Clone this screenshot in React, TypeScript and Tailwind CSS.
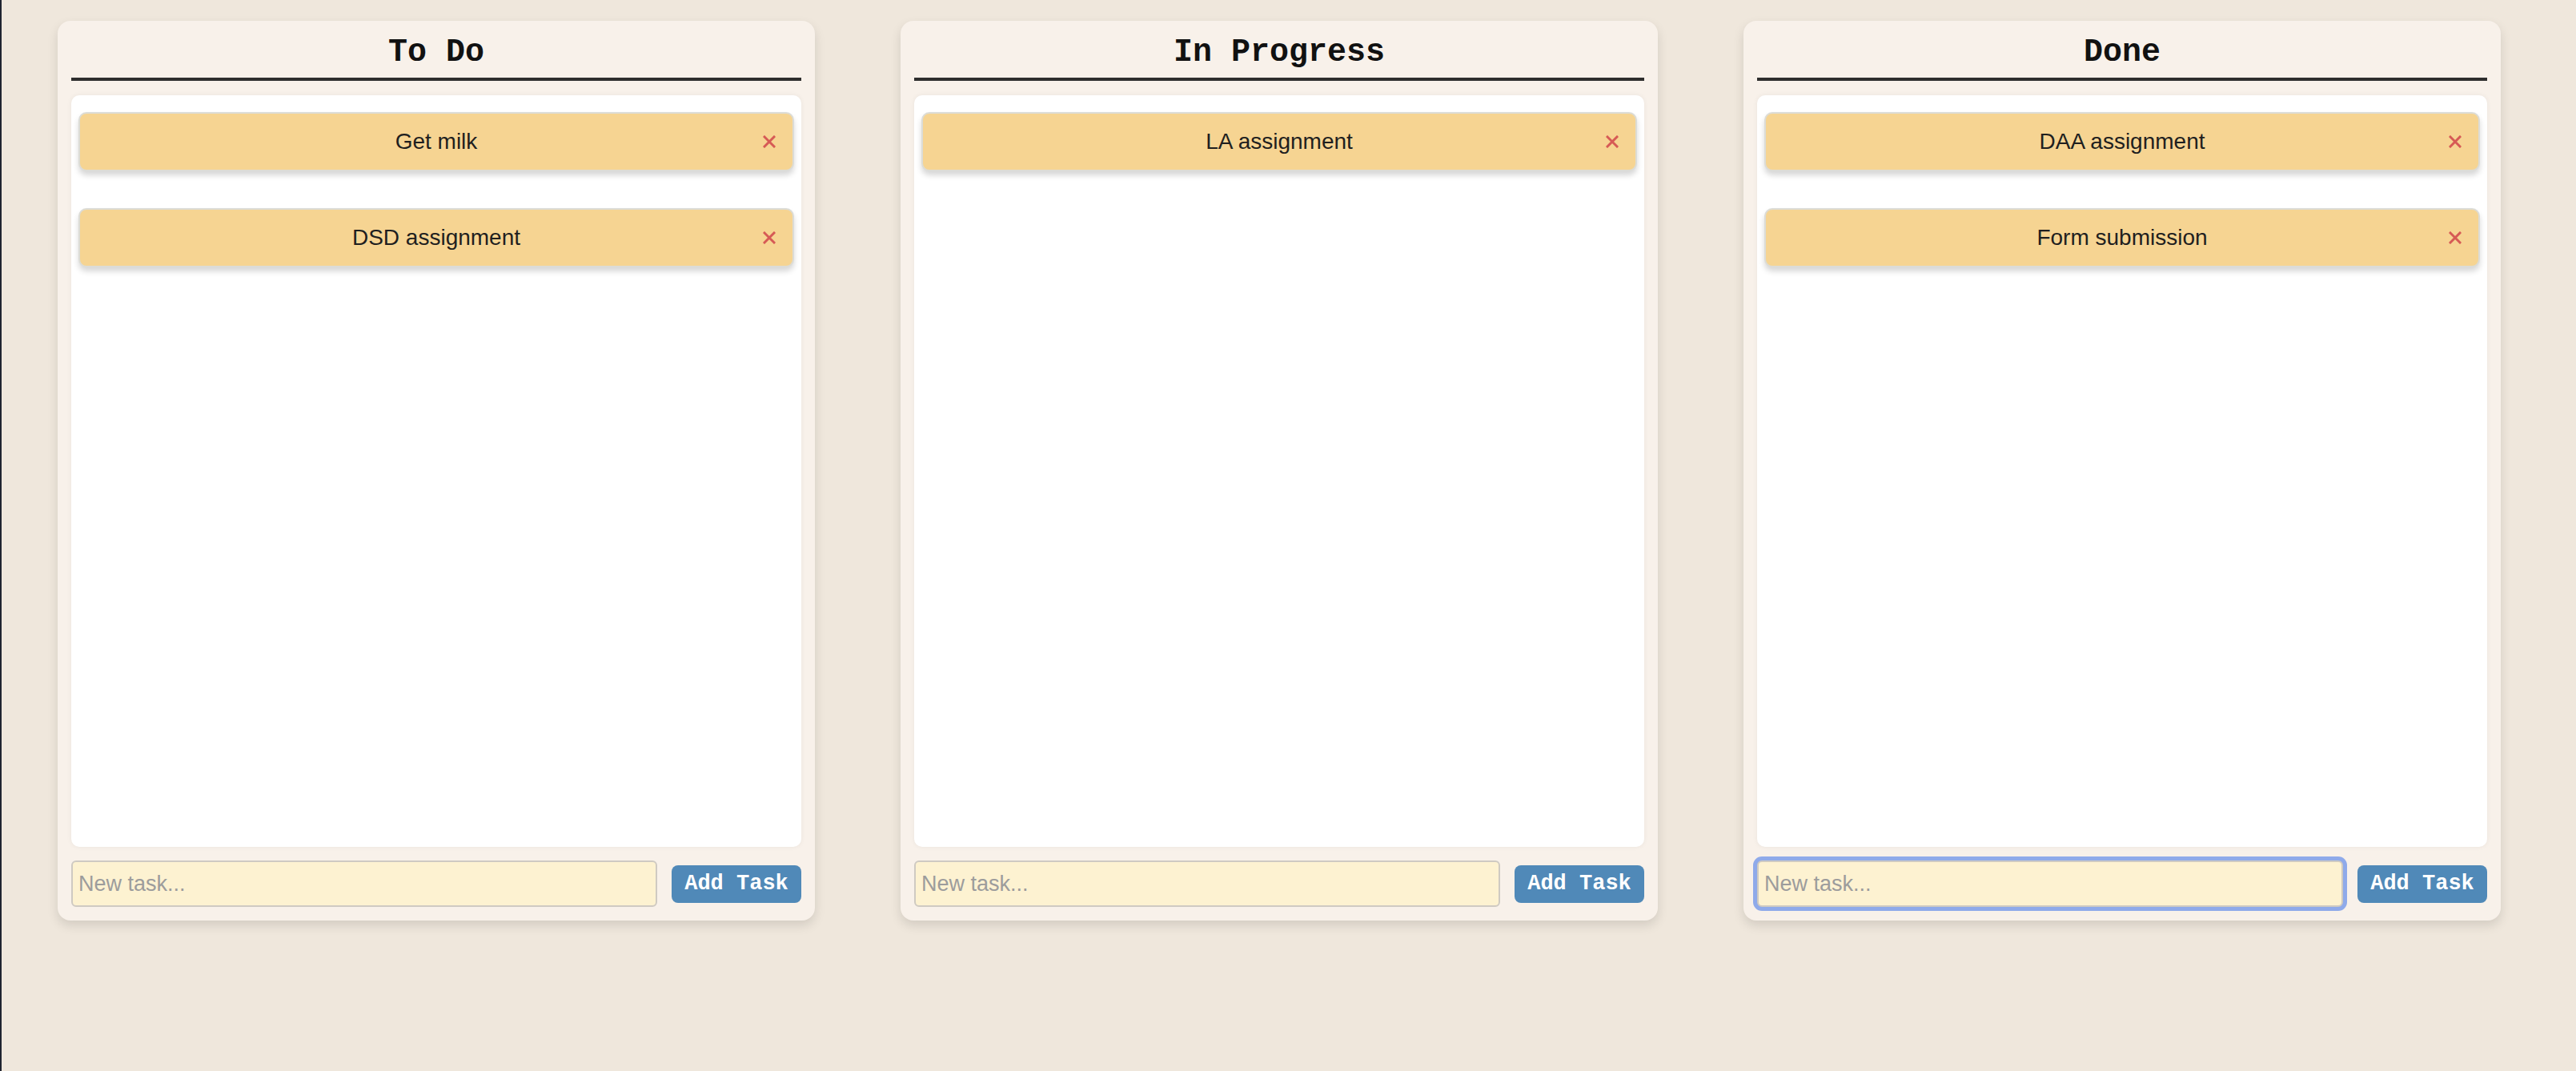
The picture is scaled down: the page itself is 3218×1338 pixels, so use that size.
import { useState } from "react";

type Column = { title: string; tasks: string[]; focused?: boolean };

const COLUMNS: Column[] = [
  { title: "To Do", tasks: ["Get milk", "DSD assignment"] },
  { title: "In Progress", tasks: ["LA assignment"] },
  { title: "Done", tasks: ["DAA assignment", "Form submission"], focused: true },
];

function CloseIcon() {
  return (
    <svg width="16" height="16" viewBox="0 0 16 16" fill="none">
      <path d="M2 2L14 14M14 2L2 14" stroke="#d65a55" strokeWidth="3" strokeLinecap="square" />
    </svg>
  );
}

function TaskTile({ text }: { text: string }) {
  return (
    <div className="relative flex h-[74px] items-center justify-center rounded-[10px] border-2 border-[#dcdcd6] bg-[#f6d492] shadow-[0_5px_7px_rgba(0,0,0,0.16)]">
      <span className="text-[28px] text-[#1f1f1f] font-['Liberation_Sans',sans-serif]">{text}</span>
      <button className="absolute right-[21px] top-1/2 -translate-y-1/2 p-0">
        <CloseIcon />
      </button>
    </div>
  );
}

function Board({ column }: { column: Column }) {
  const [draft, setDraft] = useState("");

  return (
    <div className="flex w-[946px] flex-col rounded-[16px] bg-[#f8f1ea] px-[17px] pb-[17px] pt-[17px] shadow-[0_6px_14px_rgba(0,0,0,0.12)]">
      {/* Header */}
      <h2 className="border-b-4 border-[#2e2e2e] pb-[8px] text-center text-[40px] font-bold leading-[46px] text-[#111] font-['Liberation_Mono',monospace]">
        {column.title}
      </h2>

      {/* Task list */}
      <div className="mt-[18px] flex h-[939px] flex-col gap-[46px] rounded-[10px] bg-white px-[9px] pt-[21px] shadow-[0_0_6px_rgba(0,0,0,0.06)]">
        {column.tasks.map(t => (
          <TaskTile key={t} text={t} />
        ))}
      </div>

      {/* Add row */}
      <div className="mt-[17px] flex items-center gap-[18px]">
        <input
          value={draft}
          onChange={e => setDraft(e.target.value)}
          placeholder="New task..."
          autoFocus={column.focused}
          className={`h-[58px] min-w-0 flex-1 rounded-[6px] border-2 border-[#cfcac2] bg-[#fdf2d1] px-[7px] text-[27px] text-[#222] caret-[#1a4fe0] outline-none placeholder:text-[#9c9c9c] font-['Liberation_Sans',sans-serif] ${
            column.focused ? "ring-[5px] ring-[#8faaea]" : ""
          }`}
        />
        <button className="h-[47px] w-[162px] rounded-[8px] bg-[#5089b8] text-[27px] font-bold text-white font-['Liberation_Mono',monospace]">
          Add Task
        </button>
      </div>
    </div>
  );
}

export default function App() {
  return (
    <div className="min-h-screen border-l-2 border-[#1f2330] bg-[#efe7dc] pl-[70px] pt-[26px]">
      <div className="flex items-start gap-[107px]">
        {COLUMNS.map(c => (
          <Board key={c.title} column={c} />
        ))}
      </div>
    </div>
  );
}
